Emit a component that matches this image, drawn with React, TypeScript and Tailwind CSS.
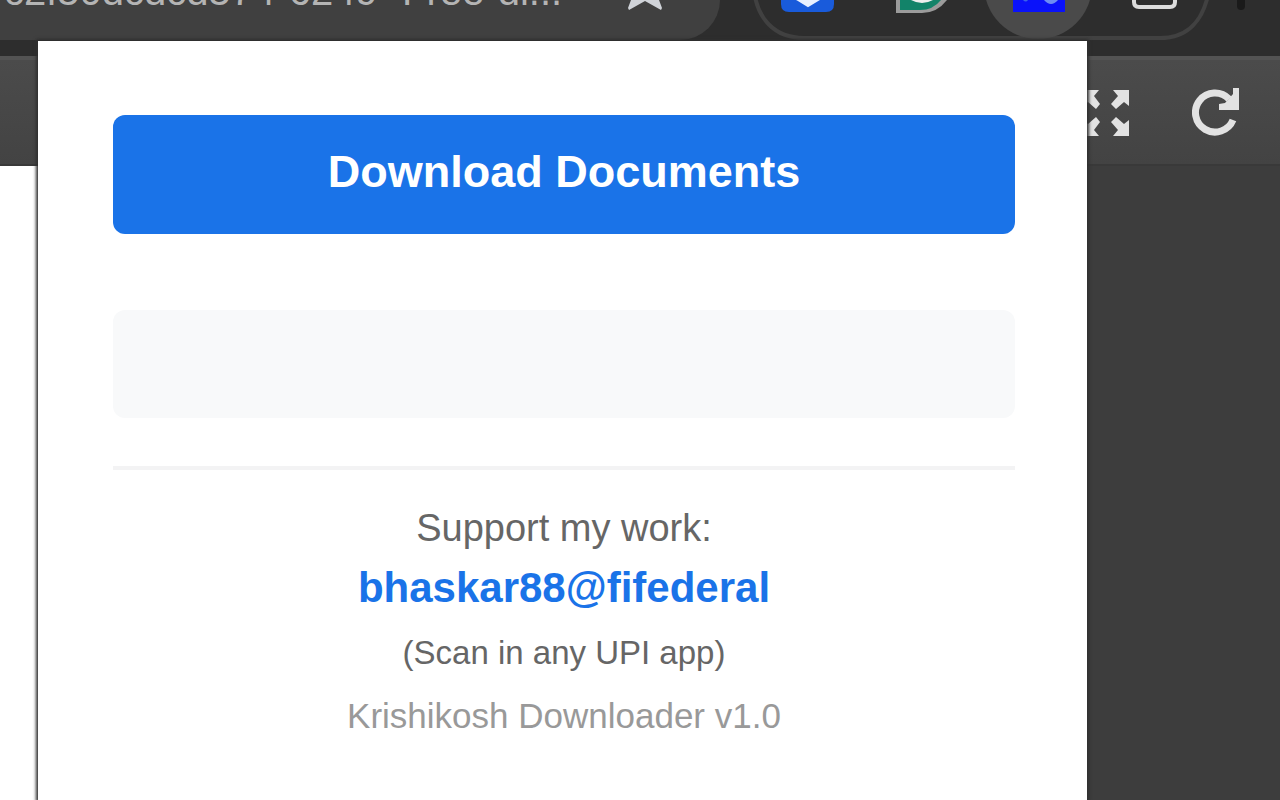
import React from 'react';

const BrowserBar: React.FC = () => {
  return (
    <header className="flex h-14 items-start bg-[#2d2d2d]">
      {/* Address bar */}
      <div className="flex h-10 min-w-0 flex-1 items-start justify-between rounded-br-[40px] bg-[#404040] pr-[52px] pl-1">
        <span className="-mt-[37px] whitespace-nowrap text-[40px] leading-[56px] text-[#b4b4b4]">
          c2f50dcdcd574-6249 -Free-dl...
        </span>
        <button type="button" aria-label="Bookmark this page">
          <svg width="48" height="12" viewBox="0 0 48 12" fill="#d0d3d8">
            <path d="M11 0h9l5-1 5 1h9l3 8-1 2-16-9-16 9-1-2z" />
          </svg>
        </button>
      </div>

      {/* Pinned extensions */}
      <svg className="block h-14 w-[560px] shrink-0" viewBox="720 0 560 56" fill="none">
        <path d="M754 -10C757 18 774 38 804 38H1160C1188 38 1204 20 1209 -10" stroke="#414141" strokeWidth="4" />
        <circle cx="1038" cy="-15" r="54" fill="#4a4a4a" />
        <path d="M781 0h53v4q0 8-8 8h-37q-8 0-8-8z" fill="#195bdb" />
        <path d="M798 0l10 6 10-6z" fill="#e8f0ff" stroke="#e8f0ff" strokeWidth="2" />
        <path d="M896 0h51q-10 13-25 13h-26z" fill="#9b9b9b" />
        <path d="M900 0h41q-8 10-21 10h-20z" fill="#128369" />
        <path d="M911 0h22q-11 6-22 0z" fill="#eee" />
        <path d="M1013 0h52v12h-52z" fill="#0a12fa" />
        <path d="M1044 0h14q-7 8-14 0z" fill="#6d8df2" />
        <path d="M1023 0h5q-2 3-5 0z" fill="#3b62e8" />
        <path d="M1134 0v2q0 5 5 5h31q5 0 5-5v-2" stroke="#dcdcdc" strokeWidth="4" />
        <path d="M1241 0v6" stroke="#1a1a1a" strokeWidth="8" strokeLinecap="round" />
      </svg>
    </header>
  );
};

const ViewerToolbar: React.FC = () => {
  return (
    <div className="flex h-[110px] items-center justify-end gap-[62px] border-t-4 border-b-2 border-t-[#535353] border-b-[#393939] bg-linear-to-b from-[#4b4b4b] to-[#434343] pr-10">
      <button type="button" aria-label="Full screen">
        <svg width="48" height="48" viewBox="0 0 48 48" fill="#e2e2e2">
          <path d="M31 2h16v16l-5-4-8 7-5-5 7-8z" />
          <path d="M31 48h16V32l-5 4-8-7-5 5 7 8z" />
          <path d="M17 2H1v16l5-4 8 7 4-5-6-8z" />
          <path d="M17 48H1V32l5 4 8-7 4 5-6 8z" />
        </svg>
      </button>
      <button type="button" aria-label="Reload">
        <svg width="48" height="50" viewBox="0 0 48 50" fill="none">
          <path d="M41 33A19.500 19.500 0 1 1 37 12" stroke="#e2e2e2" strokeWidth="7" />
          <path d="M41 1h6v22H27v-6l6-1 8-9z" fill="#e2e2e2" />
        </svg>
      </button>
    </div>
  );
};

const DownloaderPopup: React.FC = () => {
  return (
    <section className="absolute top-[41px] right-[193px] bottom-0 left-[38px] bg-white pt-[74px] pr-[72px] pl-[75px] shadow-[0_0_3px_2px_#2f2f2f]">
      <button
        type="button"
        className="block h-[119px] w-full rounded-xl bg-[#1a73e8] pb-1.5 text-[45px] font-bold text-white"
      >
        Download Documents
      </button>

      {/* Status area, empty until a download starts */}
      <div role="status" className="mt-[76px] h-[108px] rounded-xl bg-[#f8f9fa]"></div>

      <footer className="mt-12 border-t-4 border-[#f3f3f4] pt-8 text-center">
        <p className="text-[38px] leading-[52px] text-[#666]">Support my work:</p>
        <p className="text-[42px] leading-[68px] font-bold text-[#1a73e8]">bhaskar88@fifederal</p>
        <p className="text-[33px] leading-[62px] text-[#666]">(Scan in any UPI app)</p>
        <p className="text-[35px] leading-[64px] text-[#999]">Krishikosh Downloader v1.0</p>
      </footer>
    </section>
  );
};

const App: React.FC = () => {
  return (
    <div className="relative flex min-h-screen flex-col overflow-hidden bg-[#3d3d3d] font-['Liberation_Sans',Arial,sans-serif]">
      <BrowserBar />
      <ViewerToolbar />
      <main className="flex flex-1">
        <div className="w-1/2 bg-white"></div>
      </main>
      <DownloaderPopup />
    </div>
  );
};

export default App;
